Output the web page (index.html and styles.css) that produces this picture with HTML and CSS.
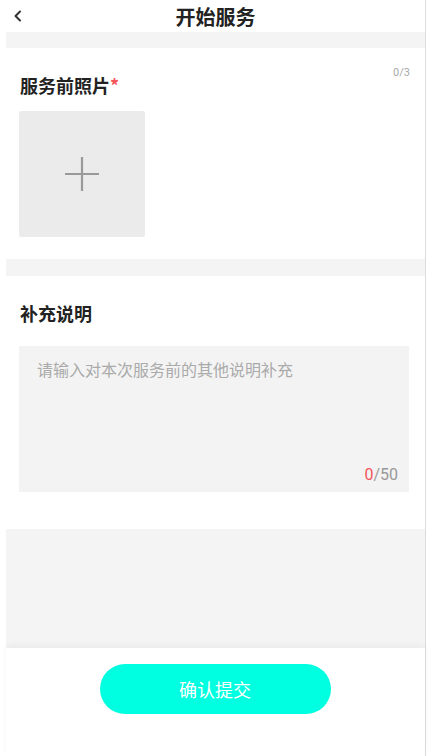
FILE: index.html
```html
<!DOCTYPE html>
<html lang="zh">
<head>
<meta charset="utf-8">
<title>开始服务</title>
<link rel="stylesheet" href="styles.css">
</head>
<body>
<div class="page">
  <header class="topbar">
    <span class="back">
      <svg width="10" height="12" viewBox="0 0 10 12"><path d="M7 1.5 L2.5 6 L7 10.5" fill="none" stroke="#333" stroke-width="2" stroke-linecap="round" stroke-linejoin="round"/></svg>
    </span>
    <h1 class="title">开始服务</h1>
  </header>
  <div class="band band-top"></div>
  <section class="photos">
    <div class="photos-head">
      <h2 class="label">服务前照片<span class="req">*</span></h2>
      <span class="count">0/3</span>
    </div>
    <div class="upload">
      <svg width="36" height="36" viewBox="0 0 36 36"><path d="M18 1 V35 M1 18 H35" stroke="#999" stroke-width="2.2" fill="none"/></svg>
    </div>
  </section>
  <div class="band band-mid"></div>
  <section class="notes">
    <h2 class="label notes-label">补充说明</h2>
    <div class="textbox">
      <div class="placeholder">请输入对本次服务前的其他说明补充</div>
      <div class="limit"><span class="cur">0</span>/50</div>
    </div>
  </section>
  <div class="filler"></div>
  <footer class="footer">
    <button class="submit">确认提交</button>
  </footer>
</div>
</body>
</html>
```

FILE: styles.css
```css
html, body {
  margin: 0;
  padding: 0;
  background: #fff;
}
body {
  font-family: "Noto Sans CJK SC", "Noto Sans", "Liberation Sans", sans-serif;
  color: #222;
}
.page {
  margin-left: 6px;
  width: 419px;
  border-right: 1px solid #dcdcdc;
  min-height: 756px;
  display: flex;
  flex-direction: column;
}
.topbar {
  height: 32px;
  display: flex;
  align-items: center;
  justify-content: center;
  position: relative;
  background: #fff;
}
.back {
  position: absolute;
  left: 7px;
  top: 10px;
  width: 10px;
  height: 12px;
  display: flex;
}
.title {
  margin: 0;
  font-size: 20px;
  font-weight: 700;
  line-height: 28px;
  color: #222;
  margin-top: 2px;
}
.band {
  background: #f4f4f4;
}
.band-top { height: 16px; }
.band-mid { height: 17px; }
.photos {
  height: 211px;
  box-sizing: border-box;
  padding: 18px 15px 0 13px;
}
.photos-head {
  display: flex;
  justify-content: space-between;
  align-items: flex-start;
}
.label {
  margin: 0;
  font-size: 18px;
  font-weight: 700;
  line-height: 24px;
  color: #222;
  padding-left: 1px;
}
.photos-head .label {
  margin-top: 7px;
}
.req {
  color: #f5555a;
  font-weight: 700;
}
.count {
  font-size: 11px;
  line-height: 14px;
  color: #aaa;
  font-family: "Roboto", "Liberation Sans", sans-serif;
}
.upload {
  margin-top: 14px;
  width: 126px;
  height: 126px;
  background: #ebebeb;
  border-radius: 2px;
  display: flex;
  align-items: center;
  justify-content: center;
}
.notes {
  height: 253px;
  box-sizing: border-box;
  padding: 25px 16px 0 13px;
}
.textbox {
  margin-top: 21px;
  height: 146px;
  box-sizing: border-box;
  background: #f3f3f3;
  padding: 11px 11px 7px 18px;
  display: flex;
  flex-direction: column;
  justify-content: space-between;
}
.placeholder {
  font-size: 16px;
  line-height: 24px;
  color: #aaa;
}
.limit {
  text-align: right;
  font-size: 16px;
  line-height: 20px;
  color: #999;
  font-family: "Roboto", "Liberation Sans", sans-serif;
}
.cur {
  color: #f5555a;
}
.filler {
  flex: 1;
  background: #f4f4f4;
}
.footer {
  height: 108px;
  box-sizing: border-box;
  padding-top: 16px;
  display: flex;
  justify-content: center;
  align-items: flex-start;
  background: #fff;
  box-shadow: 0 -3px 6px rgba(0, 0, 0, 0.04);
}
.submit {
  width: 231px;
  height: 50px;
  border: none;
  border-radius: 25px;
  background: #00ffe0;
  color: #fff;
  font-family: "Noto Sans CJK SC", "Noto Sans", sans-serif;
  font-size: 18px;
  padding: 0;
  margin-left: -1px;
}
```
